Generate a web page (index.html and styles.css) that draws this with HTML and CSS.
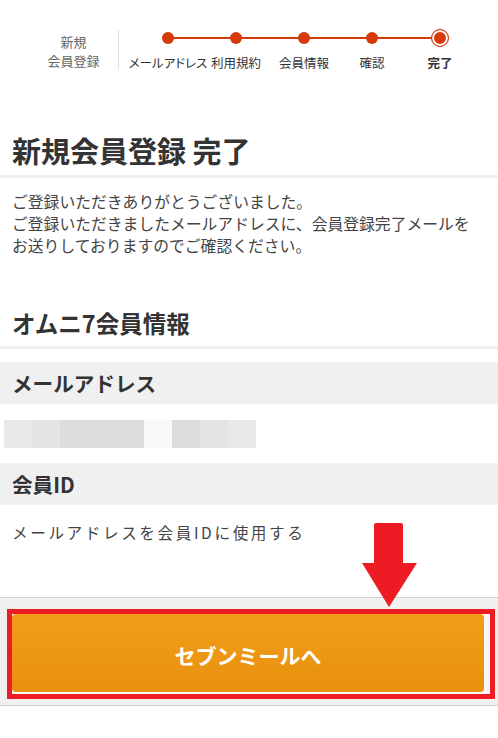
FILE: index.html
```html
<!DOCTYPE html>
<html lang="ja">
<head>
    <meta charset="UTF-8">
    <meta name="viewport" content="width=device-width, initial-scale=1.0">
    <title>新規会員登録 完了</title>
    <link rel="stylesheet" href="styles.css">
</head>
<body>
    <div class="page">
        <!-- ステップ表示 -->
        <div class="steps-head">
            <div class="steps-label">新規<br>会員登録</div>
            <ol class="steps">
                <li class="step"><span class="dot"></span><span class="step-name">メールアドレス</span></li>
                <li class="step"><span class="dot"></span><span class="step-name">利用規約</span></li>
                <li class="step"><span class="dot"></span><span class="step-name">会員情報</span></li>
                <li class="step"><span class="dot"></span><span class="step-name">確認</span></li>
                <li class="step current"><span class="dot"></span><span class="step-name">完了</span></li>
            </ol>
        </div>

        <h1 class="page-title">新規会員登録 完了</h1>
        <p class="lead">ご登録いただきありがとうございました。<br>ご登録いただきましたメールアドレスに、会員登録完了メールを<br>お送りしておりますのでご確認ください。</p>

        <h2 class="section-title">オムニ7会員情報</h2>
        <dl class="info">
            <dt>メールアドレス</dt>
            <dd class="masked">
                <span class="px p1"></span><span class="px p2"></span><span class="px p3"></span><span class="px p3"></span><span class="px p3"></span><span class="px p0"></span><span class="px p3"></span><span class="px p2"></span><span class="px p1"></span>
            </dd>
            <dt>会員ID</dt>
            <dd class="note">メールアドレスを会員IDに使用する</dd>
        </dl>

        <div class="footer-bar">
            <div class="highlight">
                <a class="btn-main" href="#">セブンミールへ</a>
            </div>
        </div>

        <svg class="pointer" width="55" height="84" viewBox="0 0 55 84">
            <path d="M14 0 H39 Q41 0 41 2 V40 H55 L27 84 L0 40 H12 V2 Q12 0 14 0 Z" fill="#ed1c24"/>
        </svg>
    </div>
</body>
</html>
```

FILE: styles.css
```css
body {
    margin: 0;
    font-family: "Noto Sans CJK JP", "Noto Sans", sans-serif;
    color: #333;
    background-color: #fff;
}
.page {
    position: relative;
    width: 498px;
}

/* steps */
.steps-head {
    display: flex;
    padding-top: 30px;
    height: 46px;
}
.steps-label {
    width: 90px;
    height: 39px;
    box-sizing: border-box;
    padding-top: 2px;
    margin-left: 29px;
    border-right: 1px solid #ddd;
    text-align: center;
    font-size: 13px;
    line-height: 19px;
    color: #666;
}
.steps {
    display: grid;
    grid-template-columns: repeat(5, 68px);
    margin: 0 0 0 15px;
    padding: 0;
    list-style: none;
}
.step {
    position: relative;
    display: flex;
    flex-direction: column;
    align-items: center;
}
.step::after {
    content: "";
    position: absolute;
    top: 7px;
    left: 34px;
    width: 68px;
    height: 2px;
    background-color: #d63a0a;
}
.step:last-child::after {
    display: none;
}
.dot {
    width: 12px;
    height: 12px;
    margin-top: 2px;
    border-radius: 50%;
    background-color: #d63a0a;
    position: relative;
    z-index: 1;
}
.step.current .dot {
    width: 18px;
    height: 18px;
    margin-top: -1px;
    box-sizing: border-box;
    border: 1.5px solid #d63a0a;
    box-shadow: inset 0 0 0 2px #fff;
}
.step-name {
    margin-top: 11px;
    font-size: 12.5px;
    line-height: 16px;
    white-space: nowrap;
    font-feature-settings: "palt";
    color: #333;
}
.step.current .step-name {
    margin-top: 8px;
    font-weight: bold;
}

/* title + lead */
.page-title {
    margin: 56px 0 0;
    padding: 0 12px 7px;
    font-size: 29px;
    line-height: 36px;
    font-weight: bold;
    border-bottom: 3px solid #efefef;
}
.lead {
    margin: 13px 0 0;
    padding: 0 12px;
    font-size: 15.8px;
    line-height: 22px;
    color: #444;
    white-space: nowrap;
}

/* member info */
.section-title {
    margin: 51px 0 0;
    padding: 0 12px 8px;
    font-size: 23.5px;
    line-height: 30px;
    font-weight: bold;
    border-bottom: 3px solid #efefef;
}
.info {
    margin: 13px 0 0;
}
.info dt {
    height: 42px;
    padding: 0 12px;
    background-color: #f0f0f0;
    font-size: 20.6px;
    line-height: 42px;
    font-weight: bold;
}
.info dd {
    margin: 0;
    padding: 16px 12px 54px;
    font-size: 15.6px;
    line-height: 22px;
    color: #444;
}
.info dd.note {
    letter-spacing: 2.6px;
}
.info dd.masked {
    display: flex;
    padding: 16px 4px 15px;
}
.px {
    width: 28px;
    height: 28px;
}
.p0 { background-color: #f9f9f9; }
.p1 { background-color: #e9e9e9; }
.p2 { background-color: #e4e4e4; }
.p3 { background-color: #dcdcdc; }

/* footer button */
.footer-bar {
    padding: 11px 3px 6px 7px;
    background-color: #f0f0f0;
    border-top: 1px solid #d0d0d0;
    border-bottom: 1px solid #d0d0d0;
}
.highlight {
    border: 5px solid #ed1c24;
    background-color: #f7f7f7;
    padding: 0 6px 2px 0;
}
.btn-main {
    display: block;
    height: 78px;
    border-radius: 4px;
    background: linear-gradient(#f29d17, #e7910f);
    color: #fff;
    text-align: center;
    font-size: 21px;
    font-weight: bold;
    line-height: 82px;
    text-decoration: none;
}
.pointer {
    position: absolute;
    left: 362px;
    top: 523px;
}
```
